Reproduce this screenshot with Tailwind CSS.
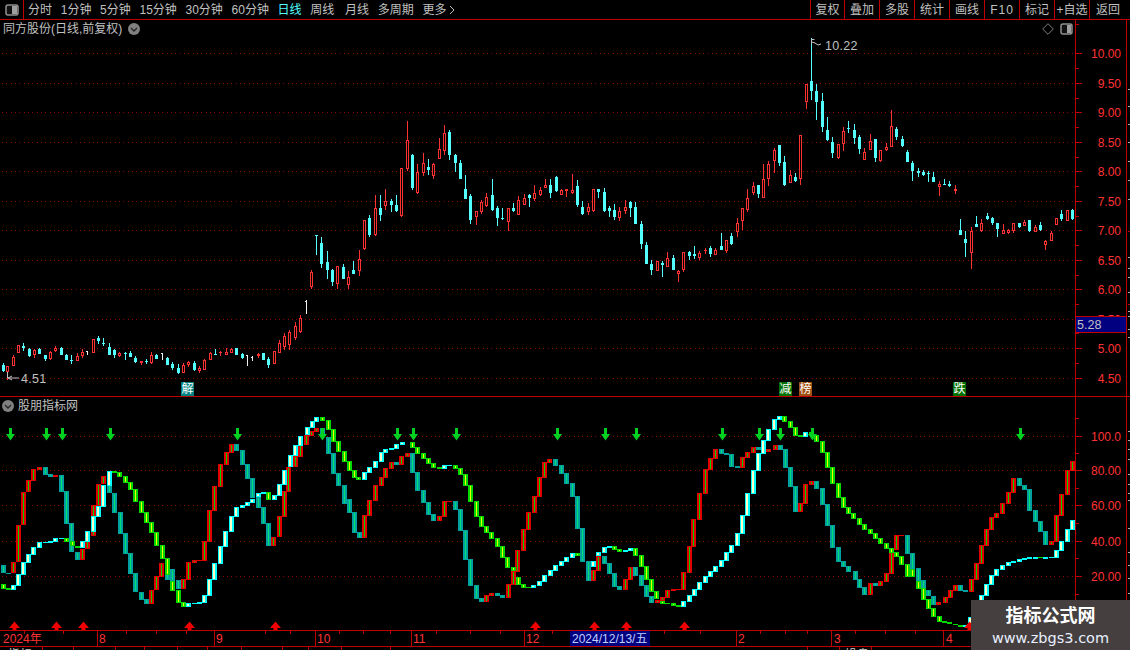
<!DOCTYPE html>
<html lang="zh">
<head>
<meta charset="UTF-8">
<title>同方股份</title>
<script src="https://cdn.jsdelivr.net/npm/@tailwindcss/browser@4"></script>
</head>
<body class="bg-black">
<div class="relative w-[1130px] h-[650px] overflow-hidden bg-black text-[12px] leading-[14px] text-[#c0c0c0] font-['Liberation_Sans','Noto_Sans_CJK_SC',sans-serif]">

  <!-- top toolbar -->
  <div class="flex h-[20px] border-b border-[#c00000]">
    <div class="flex w-[24px] items-center justify-center border-r border-[#c00000]">
      <svg width="14" height="12" viewBox="0 0 14 12"><rect x="1" y="1" width="12" height="10" rx="2" fill="#111" stroke="#909090" stroke-width="1.5"/><rect x="7" y="2" width="5" height="8" fill="#a0a0a0"/></svg>
    </div>
    <div class="flex items-center gap-[8.7px] pl-[4px]">
      <span>分时</span><span>1分钟</span><span>5分钟</span><span>15分钟</span><span>30分钟</span><span>60分钟</span>
      <span class="text-[#54ffff]">日线</span><span>周线</span><span class="ml-[2px]">月线</span><span>多周期</span>
      <span class="flex items-center gap-[3px]">更多<svg width="6" height="10" viewBox="0 0 6 10"><path d="M1 1l4 4-4 4" fill="none" stroke="#c0c0c0"/></svg></span>
    </div>
    <div class="ml-auto flex">
      <span class="flex w-[34px] items-center justify-center border-l border-[#c00000]">复权</span>
      <span class="flex w-[35px] items-center justify-center border-l border-[#c00000]">叠加</span>
      <span class="flex w-[35px] items-center justify-center border-l border-[#c00000]">多股</span>
      <span class="flex w-[35px] items-center justify-center border-l border-[#c00000]">统计</span>
      <span class="flex w-[35px] items-center justify-center border-l border-[#c00000]">画线</span>
      <span class="flex w-[35px] items-center justify-center border-l border-[#c00000] tracking-[1px]">F10</span>
      <span class="flex w-[35px] items-center justify-center border-l border-[#c00000]">标记</span>
      <span class="flex w-[35px] items-center justify-center border-l border-[#c00000]">+自选</span>
      <span class="flex w-[41px] items-center justify-center border-l border-[#c00000] pr-[4px]">返回</span>
    </div>
  </div>

  <!-- price pane -->
  <div class="flex h-[377px] border-b border-[#c00000]">
    <div class="relative w-[1075px]">
      <svg id="price" width="1075" height="376" viewBox="0 20 1075 376" class="block"></svg>
      <div class="absolute left-[3px] top-[2px] flex items-center gap-[6px]">
        <span>同方股份(日线,前复权)</span>
        <svg width="12" height="12" viewBox="0 0 12 12"><circle cx="6" cy="6" r="6" fill="#808080"/><path d="M3 5l3 3 3-3" fill="none" stroke="#222" stroke-width="1.3"/></svg>
      </div>
      <div class="absolute left-[1042px] top-[3px] flex items-center gap-[6px]">
        <svg width="12" height="12" viewBox="0 0 12 12"><path d="M6 .7L11.3 6 6 11.3.7 6z" fill="none" stroke="#808080"/></svg>
        <svg width="13" height="12" viewBox="0 0 13 12"><rect x="1" y="1" width="11" height="10" rx="2" fill="#111" stroke="#909090" stroke-width="1.5"/><rect x="7" y="2" width="4" height="8" fill="#a0a0a0"/></svg>
      </div>
      <span class="absolute left-[181px] top-[362px] flex h-[14px] w-[13px] items-center justify-center bg-[#008080] text-[12px] text-white">解</span>
      <span class="absolute left-[779px] top-[362px] flex h-[14px] w-[13px] items-center justify-center bg-[#007000] text-[12px] text-white">减</span>
      <span class="absolute left-[799px] top-[362px] flex h-[14px] w-[13px] items-center justify-center bg-[#a05010] text-[12px] text-white">榜</span>
      <span class="absolute left-[953px] top-[362px] flex h-[14px] w-[13px] items-center justify-center bg-[#007000] text-[12px] text-white">跌</span>
    </div>
    <div class="relative w-[51px] border-l border-[#c00000]">
      <svg id="priceAxis" width="50" height="376" viewBox="1076 20 50 376" class="block"></svg>
      <div class="absolute left-0 top-[296px] flex h-[17px] w-[50px] items-center border-y border-[#c00000] bg-[#000080] pl-[1px] text-[12.5px] text-[#c0c0c0]">5.28</div>
    </div>
    <svg id="priceEdge" width="4" height="376" viewBox="1126 20 4 376" class="block border-l border-[#c00000]"></svg>
  </div>

  <!-- indicator pane -->
  <div class="flex h-[234px] border-b border-[#c00000]">
    <div class="relative w-[1075px]">
      <svg id="sub" width="1075" height="233" viewBox="0 397 1075 233" class="block"></svg>
      <div class="absolute left-[2px] top-[2px] flex items-center gap-[4px]">
        <svg width="12" height="12" viewBox="0 0 12 12"><circle cx="6" cy="6" r="6" fill="#808080"/><path d="M3 5l3 3 3-3" fill="none" stroke="#222" stroke-width="1.3"/></svg>
        <span>股朋指标网</span>
      </div>
    </div>
    <div class="w-[51px] border-l border-[#c00000]">
      <svg id="subAxis" width="50" height="233" viewBox="1076 397 50 233" class="block"></svg>
    </div>
    <svg id="subEdge" width="4" height="233" viewBox="1126 397 4 233" class="block border-l border-[#c00000]"></svg>
  </div>

  <!-- date axis -->
  <div class="h-[16px] border-b border-[#c00000]">
    <svg id="dates" width="1130" height="15" viewBox="0 631 1130 15" class="block"></svg>
  </div>
  <!-- bottom strip, mostly cut off by the window -->
  <svg id="strip" width="1130" height="4" viewBox="0 647 1130 4" class="block"></svg>

  <!-- watermark -->
  <div class="absolute left-[971px] top-[600px] flex h-[50px] w-[159px] flex-col items-center bg-[#453f3f]">
    <span class="mt-[6px] text-[18px] font-bold leading-[20px] text-white">指标公式网</span>
    <span class="mt-[4px] text-[14.5px] leading-[16px] text-[#e8f0ff] font-['DejaVu_Sans',sans-serif]">www.zbgs3.com</span>
  </div>
</div>

<script>
const RED = '#ff3232', LINE = '#c00000', CYAN = '#54ffff', GRID = '#900000';

// candles: x high top bottom low type, in the pixel units of the crop they were read from
function readCandles(text, ox, oy) {
  return text.trim().split('\n').map(row => {
    const p = row.trim().split(/\s+/);
    return { x: ox + p[0] / 3, hi: oy + p[1] / 3, top: oy + p[2] / 3, bot: oy + p[3] / 3, lo: oy + p[4] / 3, t: p[5] };
  });
}

const candles = [
  ...readCandles(`
8 100 105 123 126 c
22 108 108 126 150 r
40 75 81 108 108 r
55 45 45 69 69 r
70 39 48 54 63 c
88 54 57 78 81 c
103 57 60 75 84 r
118 54 57 72 72 c
136 75 75 87 93 c
151 63 66 87 90 r
166 48 54 63 66 r
184 51 54 75 75 c
199 72 75 90 90 c
214 75 90 93 102 c
232 69 78 93 93 r
247 57 66 78 84 r
262 63 63 75 75 w
280 27 27 69 69 r
295 18 24 33 42 c
310 24 39 42 48 c
328 39 51 75 75 c
343 57 60 75 84 c
358 66 69 78 81 r
376 66 69 72 90 c
391 63 69 81 81 c
406 78 84 96 99 c
424 93 93 99 105 r
439 87 93 96 102 c
454 66 75 99 102 r
469 72 75 87 87 c
487 69 69 87 90 w
502 81 84 105 105 c
517 96 102 114 120 c
535 102 114 129 132 c
550 99 105 129 129 r
565 93 96 105 111 r
583 93 99 120 123 c
598 108 114 123 129 r
613 87 90 120 120 r
631 66 69 90 90 r
646 57 72 75 75 c
661 63 66 69 78 r
679 54 66 75 75 r
694 54 57 69 69 r
709 54 54 75 75 c
727 69 72 84 87 c
742 75 75 108 108 w
757 78 81 93 93 w
775 69 72 78 84 r
790 69 69 90 90 c
805 81 87 105 114 c
823 63 63 102 102 r
838 30 39 69 69 r`, 0, 330),
  ...readCandles(`
852 9 18 51 60 r
867 0 6 45 60 r
885 -24 -12 24 30 r
900 -45 -36 6 9 r
918 -90 -87 -51 -48 w`, 0, 330),
  ...readCandles(`
94 480 486 531 537 r
109 375 375 378 435 c
124 381 399 462 474 c
142 423 456 480 507 c
157 477 480 516 528 c
172 468 468 522 537 r
190 462 471 507 507 c
205 483 501 525 537 r
220 453 480 492 492 c
238 420 447 483 498 r
253 330 330 417 420 r
268 315 324 375 381 c
286 255 294 375 378 r
301 255 294 315 333 c
316 237 273 288 300 r
334 267 273 285 306 c
349 255 285 303 306 c
364 175 175 318 321 r
382 33 90 177 183 r
397 132 135 234 240 c
412 162 186 249 252 r
430 129 159 189 198 r
445 147 171 180 195 c
460 159 162 198 207 r
478 84 117 147 147 r
493 45 69 123 135 r
508 60 66 135 150 c
526 132 135 159 186 c
541 150 159 207 207 c
556 195 237 267 267 c
571 252 258 330 342 c
589 303 303 321 345 r
604 270 276 306 312 r
619 249 261 288 291 r
637 207 255 300 303 c
652 288 294 324 348 c
667 294 324 327 330 c
685 294 294 336 363 r
700 279 294 303 306 c
715 258 270 315 315 r`, 280, 110),
  ...readCandles(`
13 312 324 345 345 r
28 312 315 324 351 c
43 285 309 327 333 r
61 291 300 316 318 r
76 267 285 294 294 r
91 267 285 309 324 c
109 258 261 303 306 c
124 297 300 315 315 r
139 297 298 303 321 r
157 252 300 309 312 r
172 270 288 345 351 c
187 333 351 372 375 c
205 339 351 366 375 r
220 297 297 363 366 r
235 297 297 306 324 c
253 294 306 363 366 c
268 348 354 363 381 c
283 342 360 381 390 c
298 351 363 384 393 r
316 330 351 363 372 r
331 333 336 354 381 c
346 336 351 402 402 c
364 393 402 462 477 c
379 456 465 522 522 c
394 510 522 540 555 c
412 513 513 543 543 r
427 513 519 525 561 c
442 486 504 531 531 r
460 495 504 540 540 c
475 540 543 552 576 r
490 486 486 540 546 r
508 483 486 498 510 c
523 468 492 498 507 c
538 483 489 504 510 r
556 474 480 483 492 r
571 468 474 492 501 c
586 474 480 495 495 r
604 429 468 480 480 c
619 450 450 483 489 r
634 429 438 462 465 c
652 384 399 426 441 r
667 354 354 393 420 r
682 297 324 360 366 r
700 276 288 309 315 r
715 285 285 312 324 c
730 222 267 324 324 r
745 213 222 267 288 r
763 174 180 213 249 r
778 165 165 219 228 c
793 198 216 285 288 c
811 240 255 279 279 r
826 249 261 273 276 c
841 135 135 267 285 r
907 9 33 111 126 c
922 81 120 150 153 c
937 141 156 189 204 c
955 162 162 204 207 r
970 111 123 162 183 r
985 93 114 117 129 c
1003 102 120 144 162 c
1018 135 141 177 192 c
1033 174 186 210 210 r
1051 132 153 180 180 r
1066 147 147 204 216 c
1081 180 180 213 216 r
1099 159 171 180 183 r
1114 60 108 171 171 r
1129 111 117 141 150 c
1147 138 147 168 171 c
1162 180 186 216 216 c
1177 213 219 243 273 c
1195 234 243 249 261 c`, 520, 90),
  ...readCandles(`
2418 252 252 306 327 r
2433 114 243 273 300 c
2448 252 273 306 360 c`, 0, 0),
  ...readCandles(`
70 0 5 15 18 c
85 3 8 12 36 c
100 6 21 36 36 c
118 33 42 51 78 r
133 27 42 45 45 c
148 33 42 48 51 c
166 45 57 63 72 r
181 147 180 195 195 c
196 183 207 219 261 c
214 171 183 249 297 r
229 138 162 171 171 c
244 147 159 183 186 r
262 129 138 147 150 c
277 141 144 159 165 c
292 159 159 177 201 c
310 162 180 192 192 r
325 177 180 189 192 r
340 159 159 183 189 r
358 159 159 171 174 c
373 150 156 168 168 r
388 150 150 184 186 c
406 165 171 186 186 r
421 156 165 180 183 c
436 210 213 225 240 r
454 183 189 213 213 r
469 144 144 165 165 r
484 120 132 147 153 c
502 120 120 153 153 r
517 117 120 147 150 c`, 900, 170),
];

// stacked bars of the indicator: type x top bottom
const lineA = `t 3 565 573,t 8 573 574,r 13 562 573,r 18 525 562,r 23 492 525,r 28 480 492,r 33 469 481,r 39 467 470,t 45 467 475,t 50 474 477,r 55 475 477,t 61 475 492,t 66 491 524,t 71 523 552,t 77 552 560,r 82 549 560,r 87 535 549,r 93 505 536,r 98 484 506,r 103 476 484,t 109 477 493,t 114 493 513,t 120 512 534,t 125 533 554,t 130 553 574,t 135 573 592,t 141 592 600,t 146 599 604,r 151 590 604,r 156 576 590,r 161 563 577,t 167 563 580,t 172 569 581,t 178 580 589,r 183 579 589,r 188 562 580,r 194 560 563,r 199 560 561,r 204 541 561,r 209 510 542,r 214 486 511,r 220 464 487,r 226 452 465,r 231 444 453,t 236 444 451,t 242 450 465,t 247 464 479,t 252 478 498,t 258 497 508,t 263 507 524,t 268 523 546,r 273 537 546,r 279 516 537,r 284 491 517,r 288 467 492,r 295 456 467,r 300 443 457,r 306 435 445,r 311 431 436,r 316 428 432,t 322 428 435,t 328 437 454,t 333 453 474,t 338 473 486,t 344 485 504,t 349 499 513,t 354 512 533,t 359 532 538,r 364 515 538,r 369 500 516,r 375 485 501,r 381 477 486,r 385 468 478,r 391 462 469,t 396 462 465,r 401 456 465,r 407 453 457,t 412 453 473,t 417 472 491,t 423 490 503,t 428 502 515,t 433 514 521,r 439 516 521,r 444 501 517,r 449 501 502,t 455 501 510,t 460 509 531,t 465 530 560,t 470 559 586,t 476 585 599,t 481 598 602,r 486 595 602,r 491 593 596,t 497 593 596,t 502 595 598,r 508 584 598,r 513 571 585,r 517 550 572,r 523 529 551,r 528 512 530,r 534 496 513,r 539 477 497,r 544 462 478,r 549 459 463,t 555 459 466,t 561 465 474,t 566 473 484,t 572 483 497,t 577 496 529,t 582 528 562,t 588 561 581,r 593 570 581,r 598 556 571,t 604 556 564,t 609 563 574,t 614 573 587,t 619 586 590,r 625 579 590,r 630 567 580,t 635 567 576,t 641 575 586,t 646 585 597,t 651 596 603,r 657 600 603,r 662 597 601,r 667 590 598,r 673 589 591,r 678 589 590,r 683 572 590,r 689 546 573,r 693 519 547,r 699 493 520,r 705 469 494,r 710 458 470,r 715 449 459,t 721 449 454,t 726 453 455,t 731 454 467,t 737 466 468,r 742 457 468,r 747 452 458,r 753 447 453,t 758 447 450,t 763 448 451,r 768 449 452,r 775 445 450,t 780 445 450,t 785 449 468,t 790 467 487,t 795 486 512,r 800 503 512,r 805 484 504,r 811 481 485,t 816 481 489,t 822 488 505,t 827 504 526,t 832 525 548,t 838 547 562,t 843 561 567,t 848 566 572,t 855 571 580,t 859 579 588,t 864 587 595,r 870 583 595,t 875 583 586,r 880 581 586,r 886 573 582,r 891 549 574,r 896 535 550,r 901 535 536,t 907 535 554,t 912 553 569,t 918 568 581,t 923 580 592,t 928 590 596,t 933 596 605,r 938 602 605,r 945 597 603,r 950 590 598,r 955 585 591,t 960 585 591,t 965 590 592,r 971 579 592,r 976 563 580,r 981 545 564,r 986 529 546,r 991 517 530,r 996 513 518,r 1002 503 514,r 1008 492 504,r 1013 478 493,t 1019 478 486,t 1024 485 490,t 1029 489 511,t 1035 510 522,t 1040 521 532,t 1045 531 545,r 1051 541 545,r 1056 515 542,r 1061 494 516,r 1067 470 495,r 1072 461 471`;

const lineB = `g 3 584 589,g 8 588 590,c 13 585 590,c 18 574 586,c 23 562 575,c 28 554 563,c 33 547 555,c 39 542 548,c 45 542 543,c 50 541 543,c 55 538 542,c 61 538 539,g 66 538 542,g 72 541 546,g 77 546 548,c 82 541 548,c 87 531 542,c 93 516 532,c 98 506 517,c 103 485 507,c 109 471 486,g 114 471 473,g 119 472 477,g 125 476 483,g 130 482 490,g 135 489 502,g 141 501 513,g 146 512 523,g 151 522 533,g 156 532 546,g 162 545 559,g 167 558 575,g 172 581 591,g 178 590 603,g 183 602 607,c 188 603 607,c 194 603 604,c 199 602 604,c 204 595 603,c 209 579 596,c 214 563 580,c 220 546 564,c 225 531 547,c 231 516 532,c 236 507 517,c 242 505 508,c 247 502 506,c 252 499 503,c 258 493 497,c 263 492 494,g 268 492 500,c 274 495 500,c 279 484 496,c 284 470 485,c 290 455 467,c 295 445 456,c 300 436 446,c 307 427 435,c 312 421 428,c 316 417 422,g 322 417 421,g 328 420 430,g 333 429 442,g 338 441 452,g 344 451 462,g 349 461 471,g 354 470 478,g 358 477 480,c 364 472 480,c 369 467 473,c 375 461 468,c 381 452 462,c 385 449 453,c 391 448 450,c 396 444 449,c 402 442 445,g 412 442 448,g 417 447 454,g 423 453 459,g 428 458 464,g 433 463 468,g 439 467 469,c 444 465 469,c 449 465 466,g 455 465 469,g 460 468 475,g 465 474 486,g 470 485 502,g 476 501 517,g 481 516 527,g 486 526 533,g 491 532 539,g 497 538 547,g 502 546 558,g 507 557 568,g 513 567 571,g 518 577 585,g 523 584 588,g 528 587 588,c 533 585 588,c 539 581 586,c 544 575 582,c 550 570 576,c 555 565 571,c 561 561 566,c 566 557 562,c 572 553 558,g 577 553 556,c 593 561 567,c 598 552 556,c 604 547 553,c 609 546 548,g 614 546 550,g 619 549 552,c 625 550 552,c 630 548 551,g 635 548 556,g 641 555 567,g 646 566 580,g 651 579 592,g 656 591 599,g 662 601 604,g 667 603 604,g 673 603 606,g 678 605 607,c 683 601 607,c 689 595 602,c 694 589 596,c 699 582 590,c 705 576 583,c 710 571 577,c 715 566 572,c 721 560 567,c 726 552 561,c 731 545 553,c 737 533 546,c 742 515 534,c 747 493 516,c 753 470 494,c 758 453 471,c 763 440 454,c 768 429 441,c 774 419 430,c 779 416 420,g 784 416 422,g 790 421 428,g 795 427 436,g 800 435 437,c 805 432 437,g 811 432 436,g 816 435 442,g 822 441 453,g 827 452 468,g 832 467 484,g 838 483 498,g 843 497 508,g 848 507 514,g 853 513 519,g 859 518 525,g 864 524 530,g 870 529 534,g 875 533 539,g 880 538 544,g 886 543 549,g 891 548 553,g 896 552 557,g 901 556 565,g 907 564 577,g 912 569 577,g 918 581 589,g 923 588 600,g 928 599 609,g 933 608 617,g 939 616 622,g 944 621 623,g 949 622 624,g 955 624 625,g 960 625 627,c 965 625 627,c 970 617 627,c 976 606 618,c 981 595 607,c 986 584 596,c 991 575 585,c 996 569 576,c 1002 565 570,c 1008 562 566,c 1013 561 563,c 1019 559 562,c 1024 558 560,c 1029 557 559,c 1035 557 559,g 1040 557 558,c 1045 557 559,c 1051 557 558,c 1056 550 558,c 1061 541 551,c 1067 529 542,c 1072 520 530`;

const barColors = {
  r: ['#e00000', '#00d000'],
  t: ['#00a0a0', '#00e070'],
  g: ['#00d800', '#f0ff00'],
  c: ['#00ffff', '#ffffc8'],
};

function rect(x, y, w, h, fill) {
  return `<rect x="${x}" y="${y}" width="${w}" height="${h}" fill="${fill}" shape-rendering="crispEdges"/>`;
}

function hline(y, x1, x2, color) {
  let out = '';
  for (let x = x1 + 2; x < x2; x += 4.33) out += rect(Math.round(x), y, 1, 1, color);
  return out;
}

function drawBars(text) {
  return text.split(',').map(item => {
    const [t, x, top, bot] = item.split(' ');
    const [outer, inner] = barColors[t];
    const px = Math.round(+x);
    const h = Math.max(1, bot - top);
    const w = t === 'c' ? 2 : 1;
    return rect(px - 2, +top, 5, h, outer) + (h > 2 ? rect(px - w + 1, +top + 1, w, h - 2, inner) : '');
  }).join('');
}

function drawCandle(c) {
  const px = Math.round(c.x), top = Math.round(c.top), bot = Math.round(c.bot);
  const hi = Math.round(c.hi), lo = Math.round(c.lo);
  if (c.t === 'w') return rect(px, hi, 1, Math.max(lo - hi, 1), '#f0f0f0') + rect(px - 1, top, 2, 1, '#f0f0f0');
  const color = c.t === 'r' ? RED : CYAN;
  let out = rect(px, hi, 1, Math.max(top - hi, 0), color) + rect(px, bot, 1, Math.max(lo - bot, 0), color);
  out += rect(px - 1, top, 3, Math.max(bot - top, 1), color);
  if (c.t === 'r' && bot - top > 2) out += rect(px, top + 1, 1, bot - top - 2, '#000');
  return out;
}

// price pane
const priceLevels = [[53, '10.00'], [83, '9.50'], [112, '9.00'], [142, '8.50'], [171, '8.00'], [201, '7.50'], [230, '7.00'], [260, '6.50'], [289, '6.00'], [319, '5.50'], [348, '5.00'], [378, '4.50']];
let price = priceLevels.map(l => hline(l[0], 0, 1075, GRID)).join('');
price += candles.map(drawCandle).join('');
price += `<path d="M811.5 44V39.5h3M812 42l3 1 3 2 3-1" fill="none" stroke="#c0c0c0"/><text x="825" y="50" font-size="12.5" fill="#c0c0c0" letter-spacing=".3">10.22</text>`;
price += `<path d="M7.5 372v6M8 378h11M8 378l4-2M8 378l4 2" fill="none" stroke="#c0c0c0"/><text x="21" y="383" font-size="12.5" fill="#c0c0c0" letter-spacing=".3">4.51</text>`;
document.getElementById('price').innerHTML = price;

function drawAxis(levels, minors) {
  let out = '';
  levels.forEach(l => {
    out += rect(1076, l[0], 6, 1, LINE);
    out += `<text x="1121" y="${l[0] + 5}" text-anchor="end" font-size="12" fill="${RED}">${l[1]}</text>`;
  });
  minors.forEach(y => { out += rect(1076, y, 3, 1, LINE); });
  return out;
}

document.getElementById('priceAxis').innerHTML = drawAxis(priceLevels, [24, 68, 98, 127, 157, 186, 216, 245, 275, 304, 333, 363]);

function edgeTicks(list) {
  return list.map(y => rect(1127, y, 3, 1, '#b0b0b0')).join('');
}
document.getElementById('priceEdge').innerHTML = edgeTicks([30, 49, 72, 96, 120, 145, 171, 196, 222, 250, 258, 266, 273, 288, 300, 320, 345, 352, 369, 380]) + rect(1127, 239, 3, 1, LINE) + rect(1127, 336, 3, 1, LINE);

// indicator pane
const subLevels = [[436, '100.0'], [470, '80.00'], [505, '60.00'], [541, '40.00'], [576, '20.00']];
let sub = subLevels.map(l => hline(l[0], 0, 1075, GRID)).join('');
sub += drawBars(lineA) + drawBars(lineB);
[10, 46, 62, 110, 237, 322, 397, 413, 456, 557, 605, 636, 722, 759, 780, 812, 1020].forEach(x => {
  sub += `<path d="M${x - 1} 428h3v6h3l-4.5 6.5-4.5-6.5h3z" fill="#00d020"/>`;
});
[14, 56, 83, 189, 275, 535, 594, 626, 684, 969].forEach(x => {
  sub += `<path d="M${x + .5} 621.5l5.5 6.5h-3.5v2h-4v-2h-3.5z" fill="#f00000"/>`;
});
document.getElementById('sub').innerHTML = sub;
document.getElementById('subAxis').innerHTML = drawAxis(subLevels, [418, 453, 488, 523, 558, 594, 611]);
document.getElementById('subEdge').innerHTML = edgeTicks([404, 416, 428, 441, 461, 474, 486, 496, 515, 533, 551, 565, 582, 600, 620]);

// date axis
let dates = '';
[[3, '2024年'], [99, '8'], [216, '9'], [317, '10'], [413, '11'], [526, '12'], [738, '2'], [834, '3'], [946, '4']].forEach(d => {
  dates += `<text x="${d[0]}" y="643" font-size="12" fill="${RED}">${d[1]}</text>`;
});
[97, 214, 315, 411, 524, 736, 831, 943].forEach(x => { dates += rect(x, 631, 1, 15, LINE); });
[24, 63, 126, 156, 186, 265, 290, 339, 363, 390, 436, 470, 500, 552, 590, 664, 700, 760, 785, 807, 855, 885, 915].forEach(x => { dates += rect(x, 631, 1, 3, LINE); });
dates += rect(570, 631, 80, 15, '#000080');
dates += `<text x="572" y="643" font-size="12" fill="#c0d0ff">2024/12/13/五</text>`;
document.getElementById('dates').innerHTML = dates;

let strip = '';
[42, 73, 115, 144, 177, 207, 241, 282, 308, 341, 390, 807, 839, 871].forEach(x => { strip += rect(x, 647, 1, 3, LINE); });
[[8, '指标'], [845, '操盘']].forEach(t => {
  strip += `<text x="${t[0]}" y="659" font-size="12" fill="#d0d0d0">${t[1]}</text>`;
});
document.getElementById('strip').innerHTML = strip;
</script>
</body>
</html>
